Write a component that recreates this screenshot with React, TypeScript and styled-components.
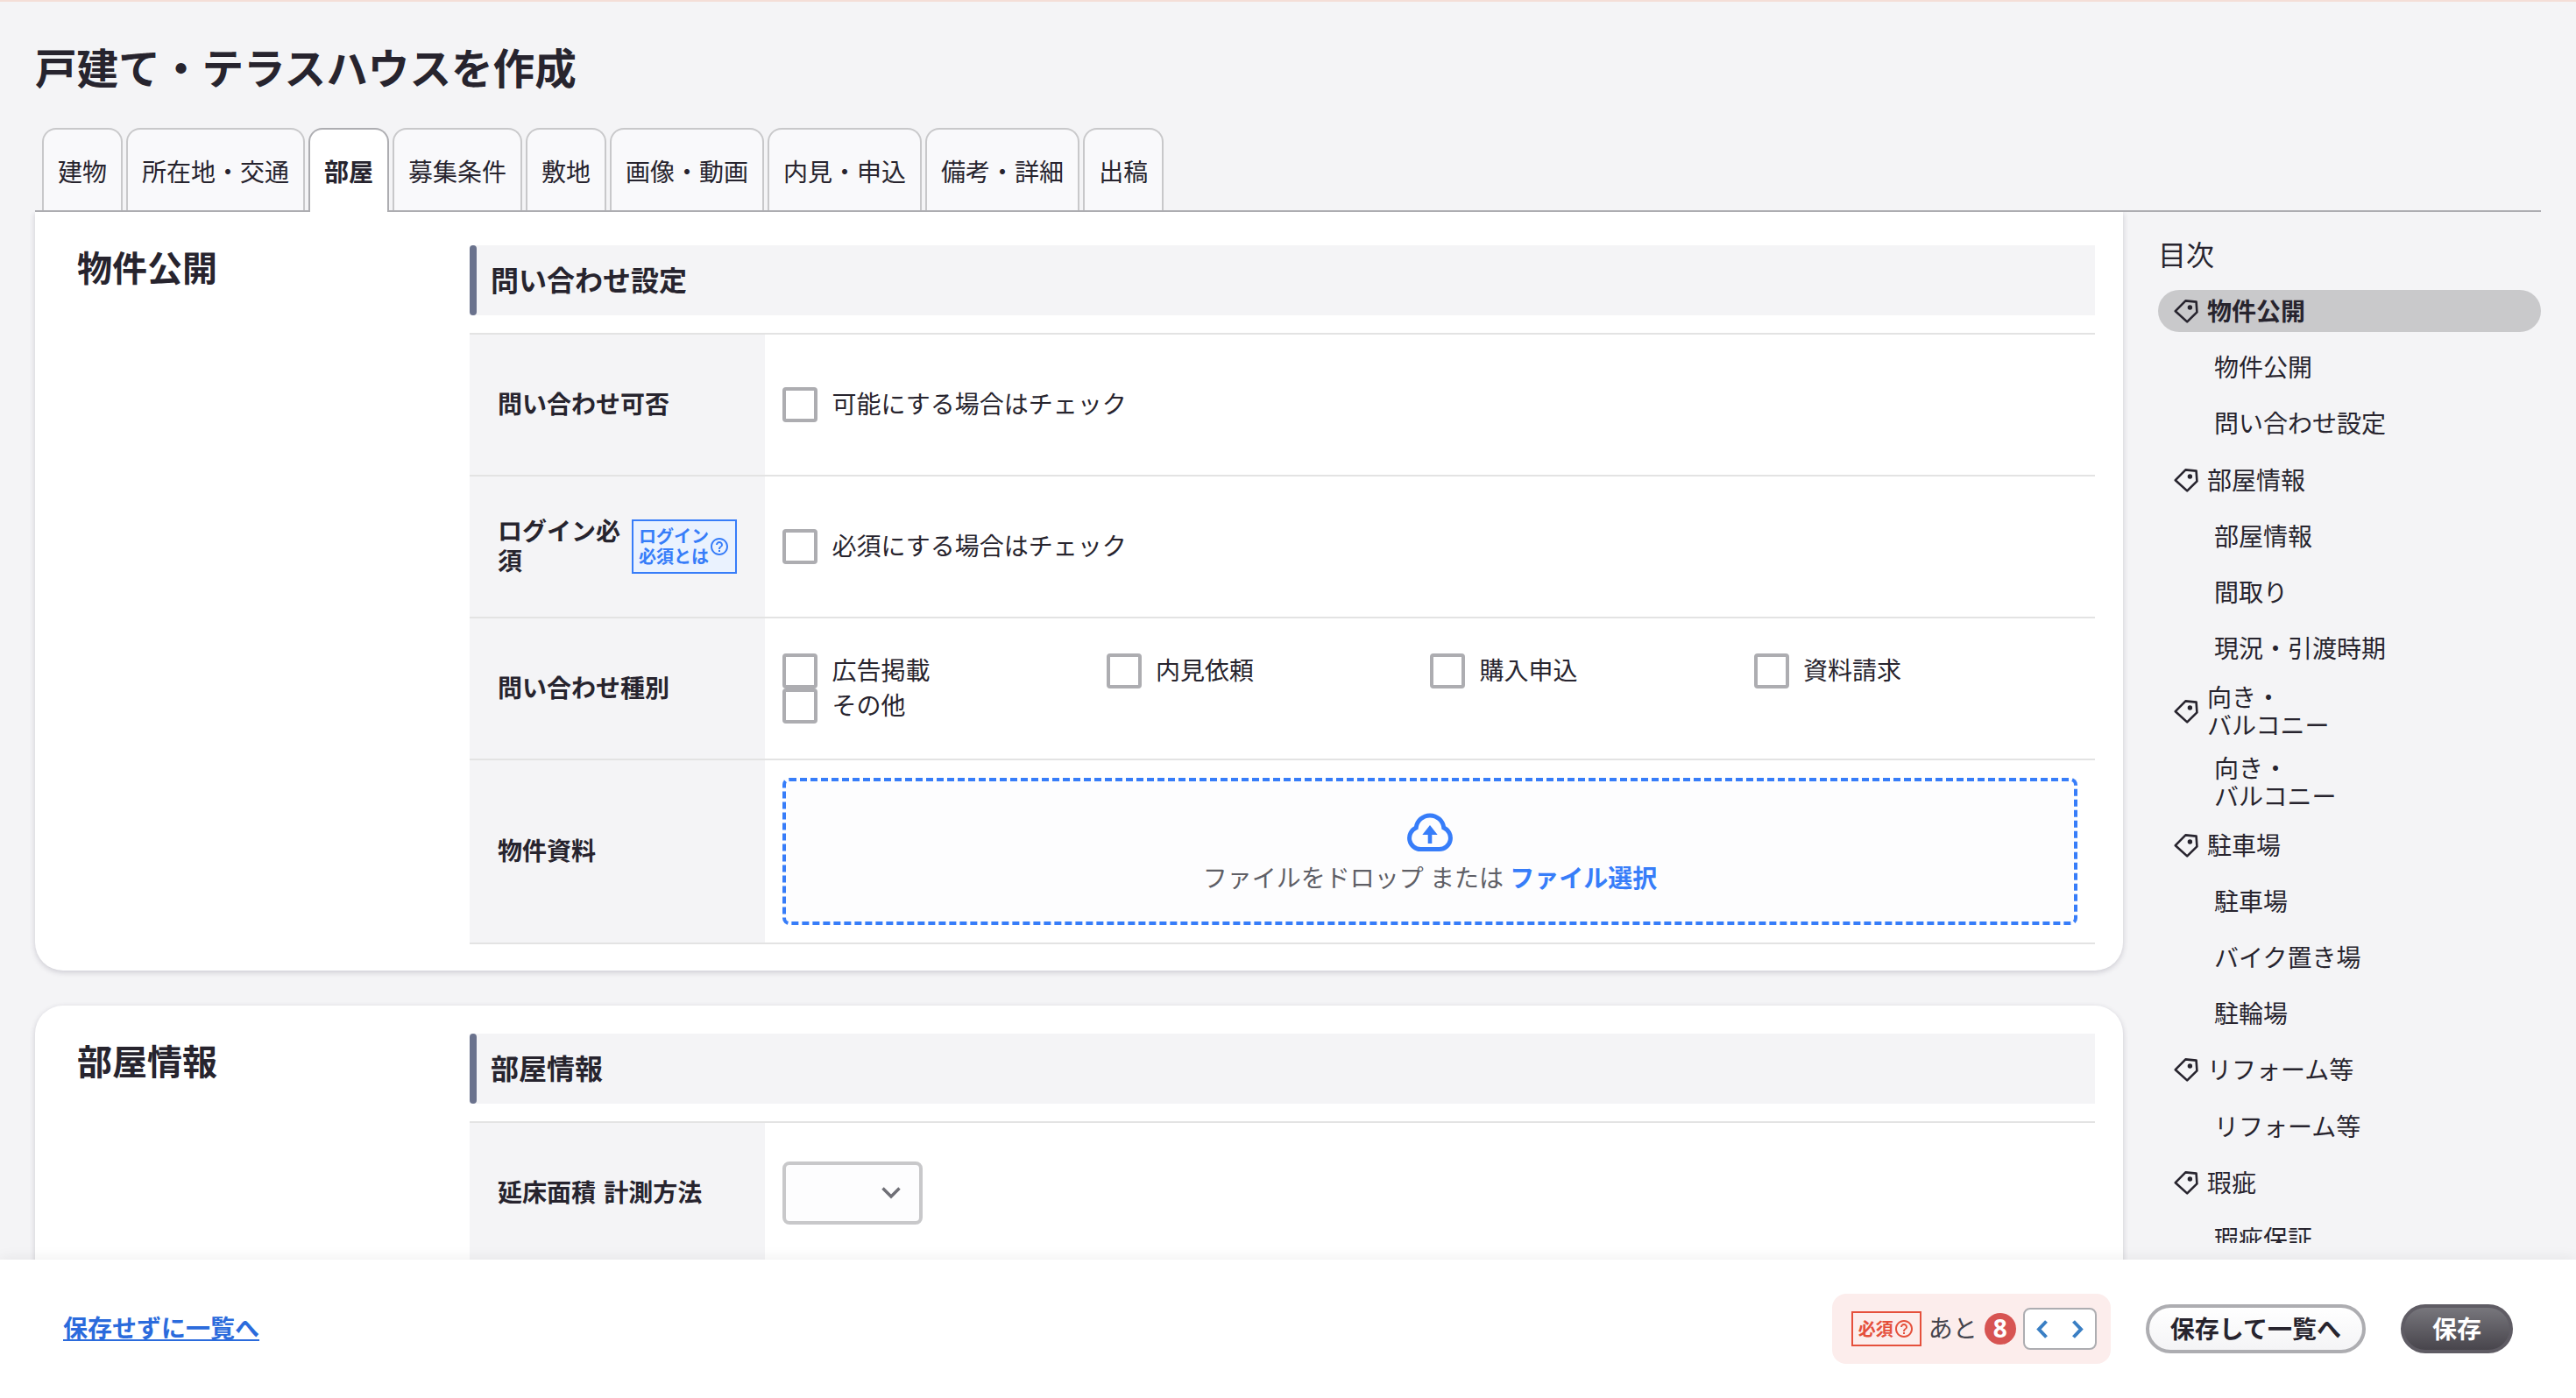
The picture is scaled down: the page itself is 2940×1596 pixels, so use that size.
import { useState } from "react";
import styled, { createGlobalStyle, css } from "styled-components";
import { MdHelpOutline } from "react-icons/md";

const GlobalStyle = createGlobalStyle`
* {
    box-sizing: border-box;
}
body {
    margin: 0;
    background: #f4f4f6;
    color: #27242e;
    font-family: "Noto Sans", "Noto Sans CJK JP", sans-serif;
    font-size: 28px;
    line-height: 1.2;
}
button {
    font-family: inherit;
    color: inherit;
    cursor: pointer;
}
`

const Page = styled.div`
    display: flex;
    flex-direction: column;
    height: 1596px;
    overflow: hidden;
    border-top: 2px solid #f4ded7;
`

const Title = styled.h1`
    margin: 0;
    padding: 44px 40px 0;
    height: 144px;
    flex-shrink: 0;
    font-size: 47.6px;
    line-height: 64px;
    font-weight: 700;
`

const Tabs = styled.nav`
    display: flex;
    flex-shrink: 0;
    gap: 4px;
    height: 96px;
    margin: 0 40px;
    padding: 0 8px;
    border-bottom: 2px solid #adadb1;
`

const Tab = styled.button<{ $active: boolean }>`
    height: 94px;
    padding: 1px 16px 0;
    border: 2px solid #c8c8ca;
    border-bottom: none;
    border-radius: 16px 16px 0 0;
    background: #f9f9fb;
    font-size: 28px;
    ${({ $active }) => $active && css`
        height: 96px;
        padding-bottom: 2px;
        border-color: #adadb1;
        background: #fff;
        font-weight: 700;
    `}
`

const Main = styled.div`
    display: flex;
    flex: 1;
    min-height: 0;
    padding: 0 40px;
    overflow: hidden;
`

const Sections = styled.main`
    display: flex;
    flex-direction: column;
    gap: 40px;
    width: 2383px;
    flex-shrink: 0;
`

const Card = styled.section<{ $first?: boolean }>`
    display: flex;
    flex-shrink: 0;
    padding: ${({ $first }) => ($first ? "38px 32px 30px 48px" : "32px 32px 30px 48px")};
    border-radius: ${({ $first }) => ($first ? "0 0 32px 32px" : "32px")};
    background: #fff;
    box-shadow: 0 2px 6px rgba(39, 36, 66, 0.2);
`

const CardTitle = styled.h2<{ $first?: boolean }>`
    width: 448px;
    flex-shrink: 0;
    margin: ${({ $first }) => ($first ? "2px 0 0" : "8px 0 0")};
    font-size: 40px;
    line-height: 48px;
`

const CardBody = styled.div`
    flex: 1;
`

const Heading = styled.h3`
    display: flex;
    align-items: center;
    height: 80px;
    margin: 0 0 20px;
    background: #f4f4f6;
    font-size: 32px;

    &::before {
        content: "";
        width: 8px;
        height: 100%;
        margin-right: 16px;
        border-radius: 4px;
        background: #6a728d;
    }
`

const Table = styled.div`
    border-top: 2px solid #e3e3e3;
`

const Row = styled.div`
    display: flex;
    min-height: 162px;
    border-bottom: 2px solid #e3e3e3;
`

const RowHead = styled.div`
    display: flex;
    align-items: center;
    gap: 13px;
    width: 337px;
    flex-shrink: 0;
    padding: 0 32px;
    background: #f4f4f6;
    font-weight: 700;
    word-spacing: 2px;
`

const RowBody = styled.div`
    flex: 1;
    align-self: center;
    padding: 0 20px;
`

const CheckGrid = styled.div`
    display: grid;
    grid-template-columns: repeat(4, 1fr);
`

const CheckLabel = styled.label`
    display: flex;
    align-items: center;
    gap: 16.5px;
`

const CheckBox = styled.input`
    appearance: none;
    width: 40px;
    height: 40px;
    margin: 0;
    border: 4px solid #adadb1;
    border-radius: 4px;
    background: #fff;
`

const HelpTag = styled.span<{ $color: string; $bg: string; $height: number }>`
    display: inline-flex;
    align-items: center;
    flex-shrink: 0;
    height: ${({ $height }) => $height}px;
    padding: 0 6px;
    border: 2px solid ${({ $color }) => $color};
    background: ${({ $bg }) => $bg};
    color: ${({ $color }) => $color};
    font-size: 20px;
    line-height: 23px;
    font-weight: 700;
    white-space: pre;
`

const DropZone = styled.div`
    display: flex;
    flex-direction: column;
    align-items: center;
    height: 168px;
    margin: 20px 0;
    padding-top: 36px;
    border: 4px dashed #377df9;
    border-radius: 8px;
    background: #fdfdfe;
    color: #5f5f66;
`

const DropText = styled.p`
    margin: 14px 0 0;
    b {
        color: #377df9;
    }
`

const SelectBox = styled.button`
    display: flex;
    align-items: center;
    justify-content: flex-end;
    width: 160px;
    height: 72px;
    padding: 0 21px;
    border: 4px solid #c8c8ca;
    border-radius: 8px;
    background: #fdfdfe;
    color: #6f6f76;
`

const Toc = styled.aside`
    width: 437px;
    height: 1177px;
    margin-left: 40px;
    overflow: hidden;
`

const TocTitle = styled.div`
    padding-top: 29px;
    height: 89px;
    font-size: 32px;
    line-height: 40px;
`

const TocList = styled.div`
    display: flex;
    flex-direction: column;
    gap: 16.2px;
`

const TocItem = styled.div<{ $sub?: boolean; $active?: boolean }>`
    display: flex;
    align-items: center;
    flex-shrink: 0;
    gap: 10px;
    min-height: 48px;
    padding-left: ${({ $sub }) => ($sub ? 64 : 18)}px;
    border-radius: 24px;
    background: ${({ $active }) => ($active ? "#c9c9cb" : "transparent")};
    font-weight: ${({ $active }) => ($active ? 700 : 400)};
    line-height: 32px;
    white-space: pre;
`

const Footer = styled.footer`
    position: relative;
    display: flex;
    align-items: center;
    flex-shrink: 0;
    height: 158px;
    padding: 0 72px;
    background: #fff;
    box-shadow: 0 0 16px rgba(0, 0, 0, 0.08);
`

const BackLink = styled.a`
    margin-right: auto;
    color: #2b6bdc;
    font-weight: 700;
    text-decoration: underline;
`

const Required = styled.div`
    display: flex;
    align-items: center;
    gap: 8px;
    height: 80px;
    margin-right: 40px;
    padding: 0 16px 0 22px;
    border-radius: 16px;
    background: #fcedec;
    color: #45444c;
`

const Count = styled.span`
    width: 36px;
    height: 36px;
    border-radius: 50%;
    background: #d75452;
    color: #fff;
    font-weight: 700;
    line-height: 35px;
    text-align: center;
`

const Pager = styled.div`
    display: flex;
    align-items: center;
    justify-content: space-between;
    width: 84px;
    height: 48px;
    padding: 0 13px;
    border: 2px solid #adadb1;
    border-radius: 8px;
    background: #fff;
    color: #3a7fc4;
`

const PillButton = styled.button<{ $dark?: boolean }>`
    height: 56px;
    padding: ${({ $dark }) => ($dark ? "0 32px" : "0 24px")};
    border: 4px solid ${({ $dark }) => ($dark ? "#5f5c64" : "#adadb1")};
    border-radius: 28px;
    background: ${({ $dark }) =>
        $dark ? "linear-gradient(#77767c, #48454c)" : "linear-gradient(#fff, #f4f4f6)"};
    color: ${({ $dark }) => ($dark ? "#fff" : "#27242e")};
    font-size: 28px;
    font-weight: 700;
    line-height: 40px;

    & + & {
        margin-left: 40px;
    }
`

const tabs = ["建物", "所在地・交通", "部屋", "募集条件", "敷地", "画像・動画", "内見・申込", "備考・詳細", "出稿"];

const inquiryTypes = ["広告掲載", "内見依頼", "購入申込", "資料請求", "その他"];

type TocEntry = { label: string; sub?: boolean };

const toc: TocEntry[] = [
    { label: "物件公開" },
    { label: "物件公開", sub: true },
    { label: "問い合わせ設定", sub: true },
    { label: "部屋情報" },
    { label: "部屋情報", sub: true },
    { label: "間取り", sub: true },
    { label: "現況・引渡時期", sub: true },
    { label: "向き・\nバルコニー" },
    { label: "向き・\nバルコニー", sub: true },
    { label: "駐車場" },
    { label: "駐車場", sub: true },
    { label: "バイク置き場", sub: true },
    { label: "駐輪場", sub: true },
    { label: "リフォーム等" },
    { label: "リフォーム等", sub: true },
    { label: "瑕疵" },
    { label: "瑕疵保証", sub: true },
];

function TagIcon() {
    return (
        <svg width="28" height="28" viewBox="0 0 28 28" fill="none">
            <path d="M1.8 14.2 13.4 2.4 25.6 3.6 26.4 15.4 15.2 26.4Z" stroke="currentColor" strokeWidth="2.6" strokeLinejoin="round" />
            <circle cx="18.4" cy="10" r="2.7" fill="currentColor" />
        </svg>
    );
}

function UploadIcon() {
    return (
        <svg width="52" height="44" viewBox="0 0 52 44" fill="none">
            <path
                d="M15.5 41.5H36.5A12.8 12.8 0 0 0 41.8 17A15.9 15.9 0 0 0 10.2 17A12.8 12.8 0 0 0 15.5 41.5Z"
                stroke="#377df9"
                strokeWidth="5"
            />
            <path d="M26 14 34.7 25H28.3V35H23.7V25H17.3Z" fill="#377df9" />
        </svg>
    );
}

function Arrow({ d, width, height, stroke }: { d: string; width: number; height: number; stroke: number }) {
    return (
        <svg width={width} height={height} viewBox={`0 0 ${width} ${height}`} fill="none">
            <path d={d} stroke="currentColor" strokeWidth={stroke} />
        </svg>
    );
}

function Check({ label }: { label: string }) {
    return (
        <CheckLabel>
            <CheckBox type="checkbox" />
            {label}
        </CheckLabel>
    );
}

function App() {
    const [tab, setTab] = useState("部屋");

    return (
        <Page>
            <GlobalStyle />
            <Title>戸建て・テラスハウスを作成</Title>
            <Tabs>
                {tabs.map((name) => (
                    <Tab key={name} $active={name === tab} onClick={() => setTab(name)}>{name}</Tab>
                ))}
            </Tabs>
            <Main>
                <Sections>
                    <Card $first>
                        <CardTitle $first>物件公開</CardTitle>
                        <CardBody>
                            <Heading>問い合わせ設定</Heading>
                            <Table>
                                <Row>
                                    <RowHead>問い合わせ可否</RowHead>
                                    <RowBody><Check label="可能にする場合はチェック" /></RowBody>
                                </Row>
                                <Row>
                                    <RowHead>
                                        <span>ログイン必須</span>
                                        <HelpTag $color="#377df9" $bg="#eaf2fe" $height={62}>
                                            {"ログイン\n必須とは"}
                                            <MdHelpOutline size={24} />
                                        </HelpTag>
                                    </RowHead>
                                    <RowBody><Check label="必須にする場合はチェック" /></RowBody>
                                </Row>
                                <Row>
                                    <RowHead>問い合わせ種別</RowHead>
                                    <RowBody>
                                        <CheckGrid>
                                            {inquiryTypes.map((type) => <Check key={type} label={type} />)}
                                        </CheckGrid>
                                    </RowBody>
                                </Row>
                                <Row>
                                    <RowHead>物件資料</RowHead>
                                    <RowBody>
                                        <DropZone>
                                            <UploadIcon />
                                            <DropText>ファイルをドロップ または <b>ファイル選択</b></DropText>
                                        </DropZone>
                                    </RowBody>
                                </Row>
                            </Table>
                        </CardBody>
                    </Card>
                    <Card>
                        <CardTitle>部屋情報</CardTitle>
                        <CardBody>
                            <Heading>部屋情報</Heading>
                            <Table>
                                <Row>
                                    <RowHead>延床面積 計測方法</RowHead>
                                    <RowBody>
                                        <SelectBox>
                                            <Arrow d="M1.5 1.5 11 11 20.5 1.5" width={22} height={14} stroke={3.4} />
                                        </SelectBox>
                                    </RowBody>
                                </Row>
                            </Table>
                        </CardBody>
                    </Card>
                </Sections>
                <Toc>
                    <TocTitle>目次</TocTitle>
                    <TocList>
                        {toc.map((item, index) => (
                            <TocItem key={index} $sub={item.sub} $active={index === 0}>
                                {!item.sub && <TagIcon />}
                                {item.label}
                            </TocItem>
                        ))}
                    </TocList>
                </Toc>
            </Main>
            <Footer>
                <BackLink>保存せずに一覧へ</BackLink>
                <Required>
                    <HelpTag $color="#e5503c" $bg="transparent" $height={40}>
                        必須
                        <MdHelpOutline size={24} />
                    </HelpTag>
                    あと
                    <Count>8</Count>
                    <Pager>
                        <Arrow d="M11.5 1.5 3 10.5 11.5 19.5" width={14} height={21} stroke={4} />
                        <Arrow d="M2.5 1.5 11 10.5 2.5 19.5" width={14} height={21} stroke={4} />
                    </Pager>
                </Required>
                <PillButton>保存して一覧へ</PillButton>
                <PillButton $dark>保存</PillButton>
            </Footer>
        </Page>
    );
}

export default App;
